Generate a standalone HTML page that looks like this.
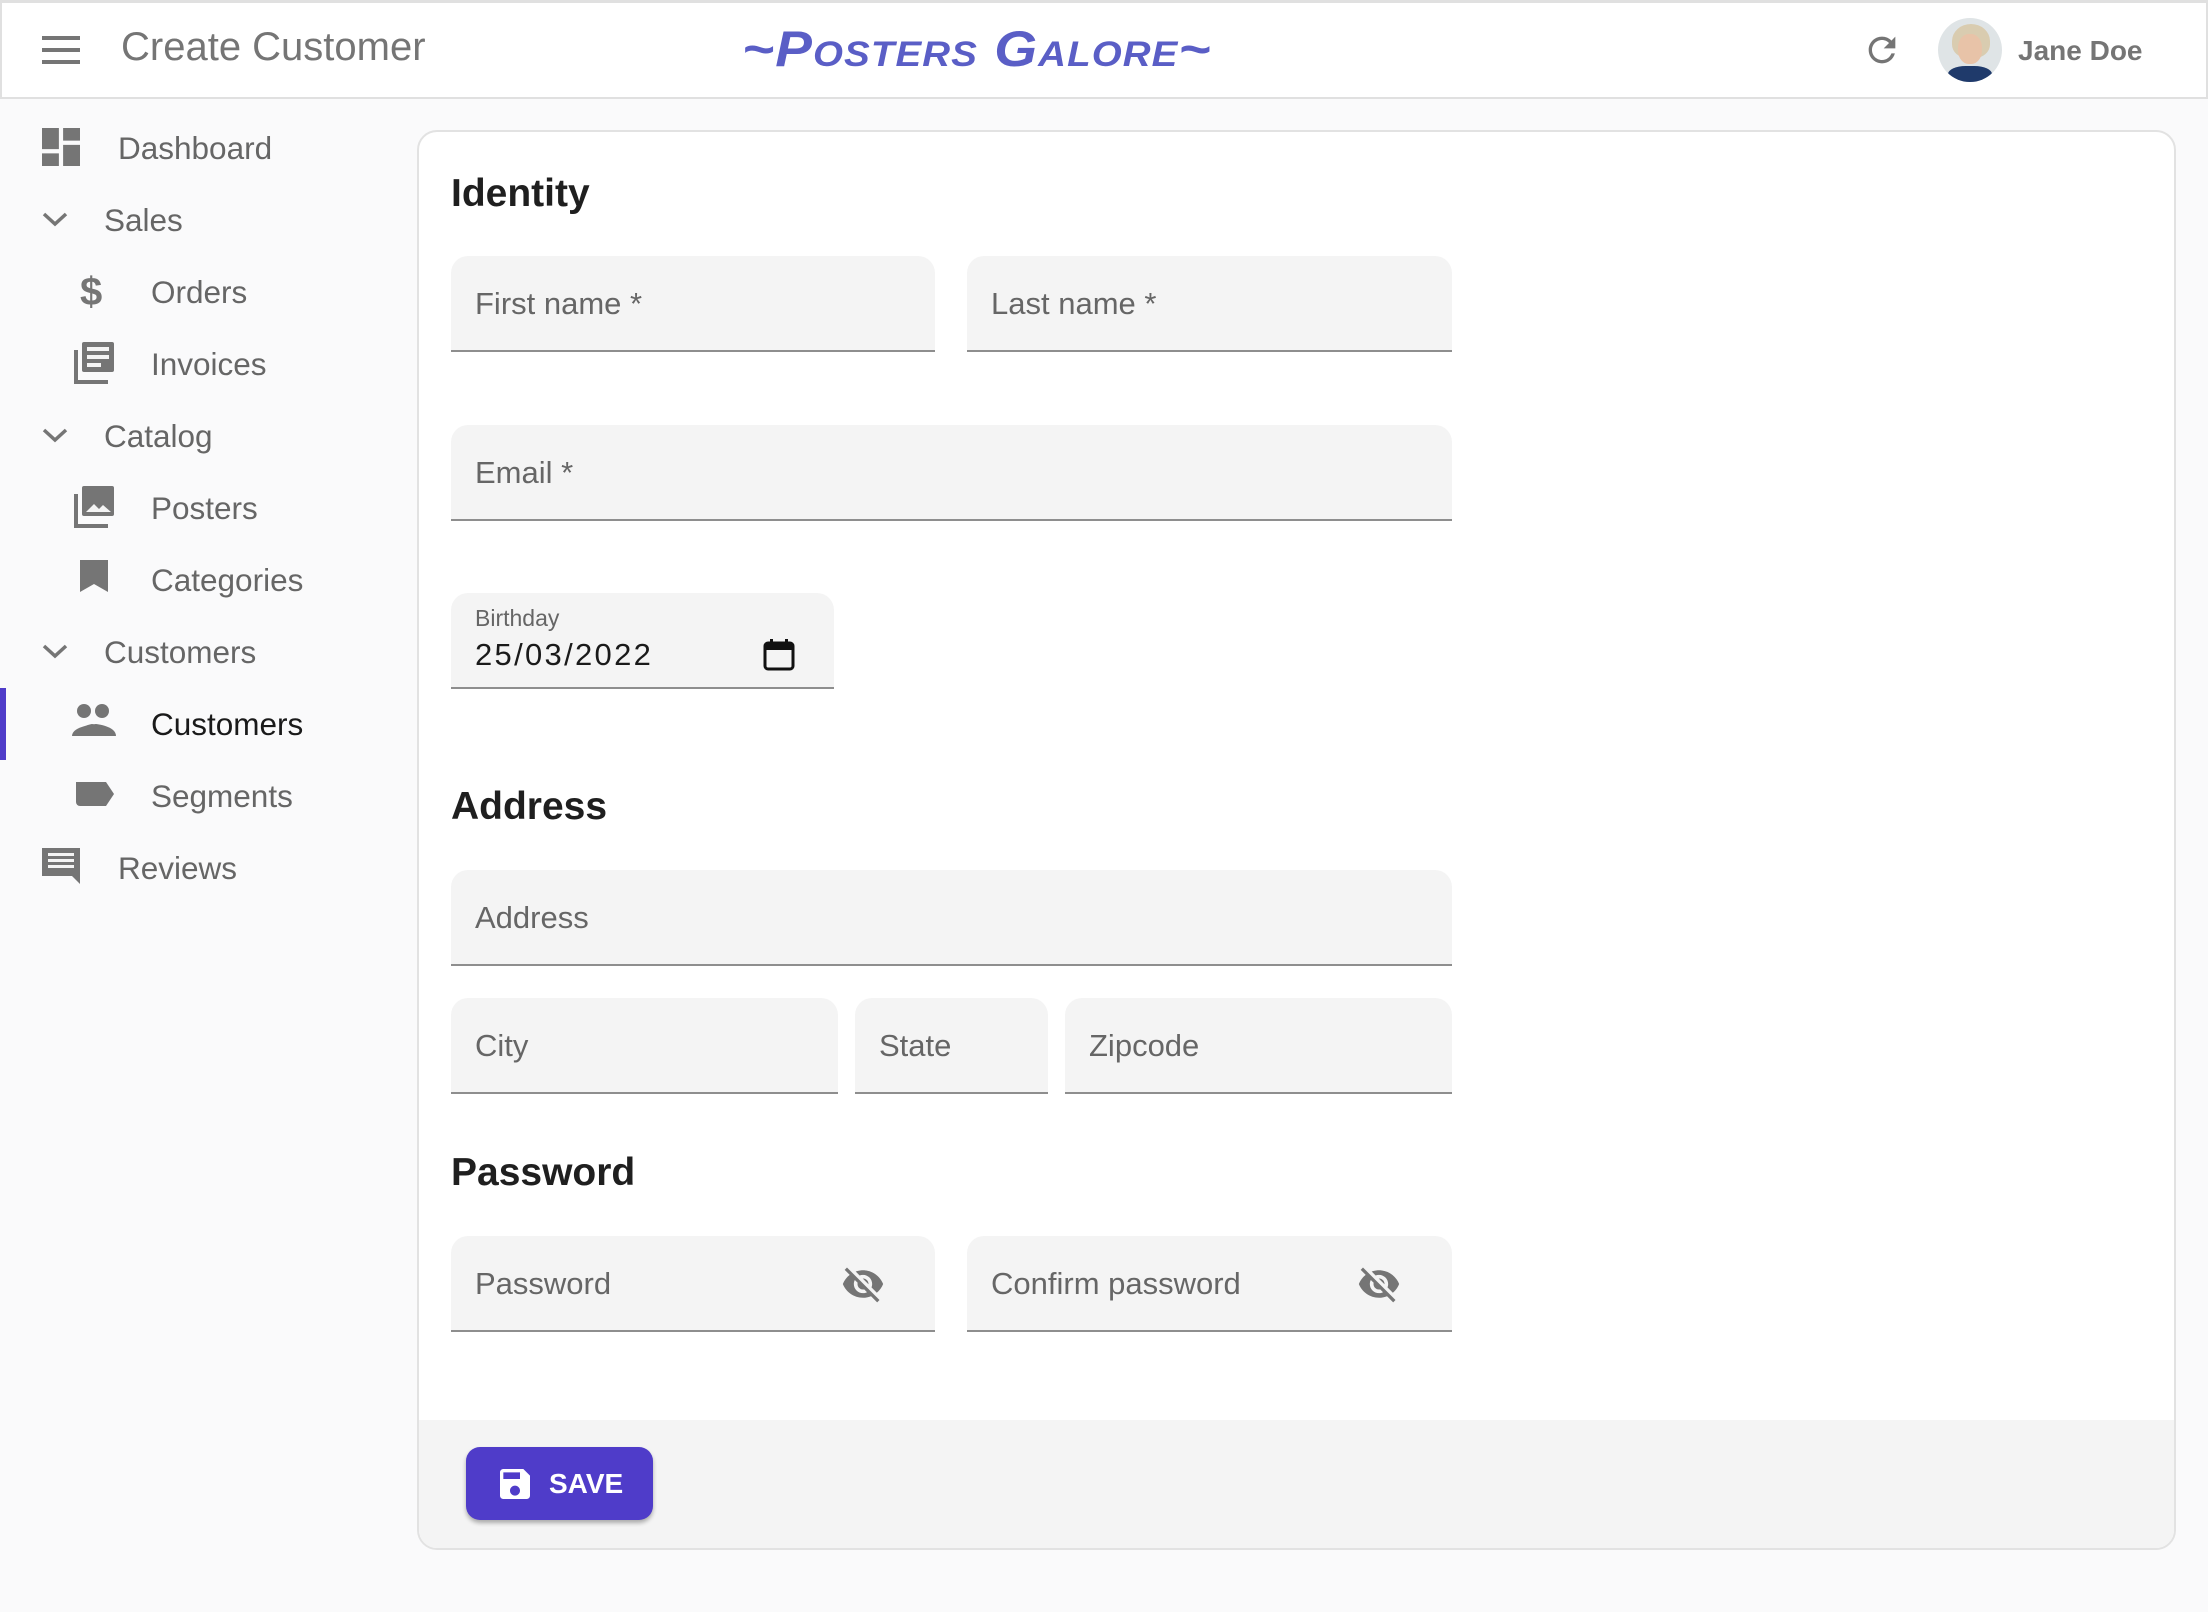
<!DOCTYPE html>
<html><head><meta charset="utf-8"><style>
*{box-sizing:border-box;margin:0;padding:0}
body{width:2208px;height:1612px;background:#fafafb;font-family:"Liberation Sans",sans-serif;position:relative;overflow:hidden}
.abs{position:absolute}
.hdr{left:0;top:0;width:2208px;height:99px;background:#fff;border:2px solid #e0e0e0;border-top-width:3px}
.nav{position:absolute;display:flex;align-items:center;font-size:31.5px;color:#666;height:60px}
.nav svg{position:absolute;fill:#757575}
.card{left:417px;top:130px;width:1759px;height:1420px;background:#fff;border:2px solid #e2e2e2;border-radius:20px;overflow:hidden}
.h{position:absolute;font-size:39px;font-weight:bold;color:#1f1f1f}
.f{position:absolute;background:#f4f4f4;border-radius:17px 17px 0 0;border-bottom:2px solid #8e8e8e;height:96px}
.f span{position:absolute;left:24px;top:30px;font-size:31px;color:#666}
.f svg{position:absolute;fill:#757575}
</style></head><body>
<div class="abs hdr"></div>
<svg class="abs" style="left:42px;top:36px" width="38" height="28" viewBox="0 0 38 28"><rect y="0" width="38" height="4" fill="#757575"/><rect y="12" width="38" height="4" fill="#757575"/><rect y="24" width="38" height="4" fill="#757575"/></svg>
<div class="abs" style="left:121px;top:25px;font-size:40px;color:#757575">Create Customer</div>
<div class="abs" style="left:742px;top:20px;font-size:50px;color:#5a5ec6;font-style:italic;font-weight:bold;font-variant:small-caps;letter-spacing:1px;transform:scaleX(1.1);transform-origin:left">~Posters Galore~</div>
<svg class="abs" style="left:1862px;top:30px" width="40" height="40" viewBox="0 0 24 24"><path fill="#757575" d="M17.65 6.35C16.2 4.9 14.21 4 12 4c-4.42 0-7.99 3.58-7.990 8s3.57 8 7.99 8c3.73 0 6.84-2.55 7.73-6h-2.08c-.82 2.33-3.04 4-5.65 4-3.31 0-6-2.69-6-6s2.69-6 6-6c1.66 0 3.14.69 4.22 1.78L13 11h7V4l-2.35 2.35z"/></svg>
<div class="abs" style="left:1938px;top:18px;width:64px;height:64px;border-radius:50%;background:#dfe4e6;overflow:hidden">
<div class="abs" style="left:14px;top:6px;width:38px;height:34px;border-radius:50% 50% 40% 40%;background:#d9ccb0"></div>
<div class="abs" style="left:20px;top:16px;width:24px;height:30px;border-radius:45%;background:#e8c3a8"></div>
<div class="abs" style="left:10px;top:48px;width:44px;height:20px;border-radius:40% 40% 0 0;background:#1f3a6b"></div></div>
<div class="abs" style="left:2018px;top:35px;font-size:28px;font-weight:bold;color:#757575">Jane Doe</div>

<!-- sidebar -->
<div class="abs" style="left:0;top:688px;width:6px;height:72px;background:#4f3cc9"></div>
<div class="nav" style="left:118px;top:118px">Dashboard</div>
<svg class="abs" style="left:42px;top:128px" width="38" height="38" viewBox="3 3 18 18"><path fill="#757575" d="M3 13h8V3H3v10zm0 8h8v-6H3v6zm10 0h8V11h-8v10zm0-18v6h8V3h-8z"/></svg>
<div class="nav" style="left:104px;top:190px">Sales</div>
<div class="nav" style="left:151px;top:262px">Orders</div>
<div class="nav" style="left:151px;top:334px">Invoices</div>
<div class="nav" style="left:104px;top:406px">Catalog</div>
<div class="nav" style="left:151px;top:478px">Posters</div>
<div class="nav" style="left:151px;top:550px">Categories</div>
<div class="nav" style="left:104px;top:622px">Customers</div>
<div class="nav" style="left:151px;top:694px;color:#1a1a1a">Customers</div>
<div class="nav" style="left:151px;top:766px">Segments</div>
<div class="nav" style="left:118px;top:838px">Reviews</div>
<svg class="abs" style="left:0;top:0" width="140" height="900">
<g fill="none" stroke="#757575" stroke-width="3.5"><path d="M44 214l11 10 11-10"/><path d="M44 430l11 10 11-10"/><path d="M44 646l11 10 11-10"/></g>
<text x="80" y="305" font-size="40" fill="#757575" font-family="Liberation Sans" font-weight="bold">$</text>
<g fill="#757575">
<path d="M74 350h4v30h30v4H74z"/><rect x="82" y="342" width="32" height="30" rx="2"/>
<path d="M74 494h4v30h30v4H74z"/><rect x="82" y="486" width="32" height="30" rx="2"/>
<path d="M80 560h28v32l-14-8-14 8z"/>
<circle cx="84" cy="711" r="7"/><circle cx="102" cy="711" r="7"/><path d="M72 736c0-10 24-12 24-12s20 2 20 12z"/><path d="M78 736c0-10 14-12 14-12s14 2 14 12z"/>
<path d="M76 782h30l8 12-8 12H80a4 4 0 0 1-4-4z"/>
<path d="M42 848h38v28H52l-10 0z"/><path d="M72 876h8v8z"/>
</g>
<g fill="#f4f4f4"><rect x="87" y="347" width="22" height="4"/><rect x="87" y="355" width="22" height="4"/><rect x="87" y="363" width="14" height="4"/>
<path d="M86 512l8-8 5 5 4-4 8 7z"/>
<rect x="48" y="853" width="26" height="3"/><rect x="48" y="859" width="26" height="3"/><rect x="48" y="865" width="26" height="3"/></g>
</svg>

<div class="abs card">
<div class="abs" style="left:0;top:1288px;width:1759px;height:132px;background:#f4f4f4"></div>
<div class="h" style="left:32px;top:40px">Identity</div>
<div class="h" style="left:32px;top:653px">Address</div>
<div class="h" style="left:32px;top:1019px">Password</div>
<div class="f" style="left:32px;top:124px;width:484px"><span>First name *</span></div>
<div class="f" style="left:548px;top:124px;width:485px"><span>Last name *</span></div>
<div class="f" style="left:32px;top:293px;width:1001px"><span>Email *</span></div>
<div class="f" style="left:32px;top:461px;width:383px"><span style="top:12px;font-size:23px">Birthday</span><span style="top:44px;color:#1a1a1a;font-size:31px;letter-spacing:2.3px">25/03/2022</span>
<svg style="left:312px;top:44px" width="32" height="34" viewBox="0 0 32 34"><rect x="2" y="6" width="28" height="26" rx="3" fill="none" stroke="#111" stroke-width="3"/><rect x="2" y="6" width="28" height="7" fill="#111"/><rect x="7" y="2" width="3" height="6" fill="#111"/><rect x="22" y="2" width="3" height="6" fill="#111"/></svg></div>
<div class="f" style="left:32px;top:738px;width:1001px"><span>Address</span></div>
<div class="f" style="left:32px;top:866px;width:387px"><span>City</span></div>
<div class="f" style="left:436px;top:866px;width:193px"><span>State</span></div>
<div class="f" style="left:646px;top:866px;width:387px"><span>Zipcode</span></div>
<div class="f" style="left:32px;top:1104px;width:484px"><span>Password</span>
<svg style="left:390px;top:26px" width="44" height="44" viewBox="0 0 24 24"><path d="M12 7c2.76 0 5 2.24 5 5 0 .65-.13 1.26-.36 1.83l2.92 2.92c1.51-1.26 2.7-2.89 3.43-4.75-1.73-4.39-6-7.5-11-7.5-1.4 0-2.74.25-3.98.7l2.16 2.16C10.74 7.130 11.35 7 12 7zM2 4.27l2.28 2.28.46.46C3.08 8.3 1.78 10.02 1 12c1.73 4.39 6 7.5 11 7.5 1.55 0 3.03-.3 4.38-.84l.42.42L19.73 22 21 20.73 3.27 3 2 4.27zM7.53 9.8l1.55 1.55c-.05.21-.08.43-.08.65 0 1.66 1.34 3 3 3 .22 0 .44-.03.65-.08l1.55 1.55c-.67.33-1.41.53-2.2.53-2.76 0-5-2.24-5-5 0-.79.2-1.53.53-2.2zm4.31-.78l3.15 3.15.02-.16c0-1.66-1.34-3-3-3l-.17.01z"/></svg></div>
<div class="f" style="left:548px;top:1104px;width:485px"><span>Confirm password</span>
<svg style="left:390px;top:26px" width="44" height="44" viewBox="0 0 24 24"><path d="M12 7c2.76 0 5 2.24 5 5 0 .65-.13 1.26-.36 1.83l2.92 2.92c1.51-1.26 2.7-2.89 3.43-4.75-1.73-4.39-6-7.5-11-7.5-1.4 0-2.74.25-3.98.7l2.16 2.16C10.74 7.13 11.35 7 12 7zM2 4.27l2.28 2.28.46.46C3.08 8.3 1.78 10.02 1 12c1.73 4.39 6 7.5 11 7.5 1.55 0 3.03-.3 4.38-.84l.42.42L19.73 22 21 20.73 3.27 3 2 4.27zM7.53 9.8l1.55 1.55c-.05.21-.08.43-.08.65 0 1.66 1.34 3 3 3 .22 0 .44-.03.65-.08l1.55 1.55c-.67.33-1.41.53-2.2.53-2.76 0-5-2.24-5-5 0-.79.2-1.53.53-2.2zm4.31-.78l3.15 3.15.02-.16c0-1.66-1.34-3-3-3l-.17.01z"/></svg></div>
<div class="abs" style="left:47px;top:1315px;width:187px;height:73px;background:#4f3cc9;border-radius:14px;box-shadow:0 3px 4px rgba(0,0,0,.3);color:#fff;font-weight:bold;font-size:28px">
<svg class="abs" style="left:34px;top:22px" width="30" height="30" viewBox="3 3 18 18"><path fill="#fff" d="M17 3H5c-1.11 0-2 .9-2 2v14c0 1.1.89 2 2 2h14c1.1 0 2-.9 2-2V7l-4-4zm-5 16c-1.66 0-3-1.34-3-3s1.34-3 3-3 3 1.34 3 3-1.34 3-3 3zm3-10H5V5h10v4z"/></svg>
<span class="abs" style="left:83px;top:21px">SAVE</span></div>
</div>
</body></html>
